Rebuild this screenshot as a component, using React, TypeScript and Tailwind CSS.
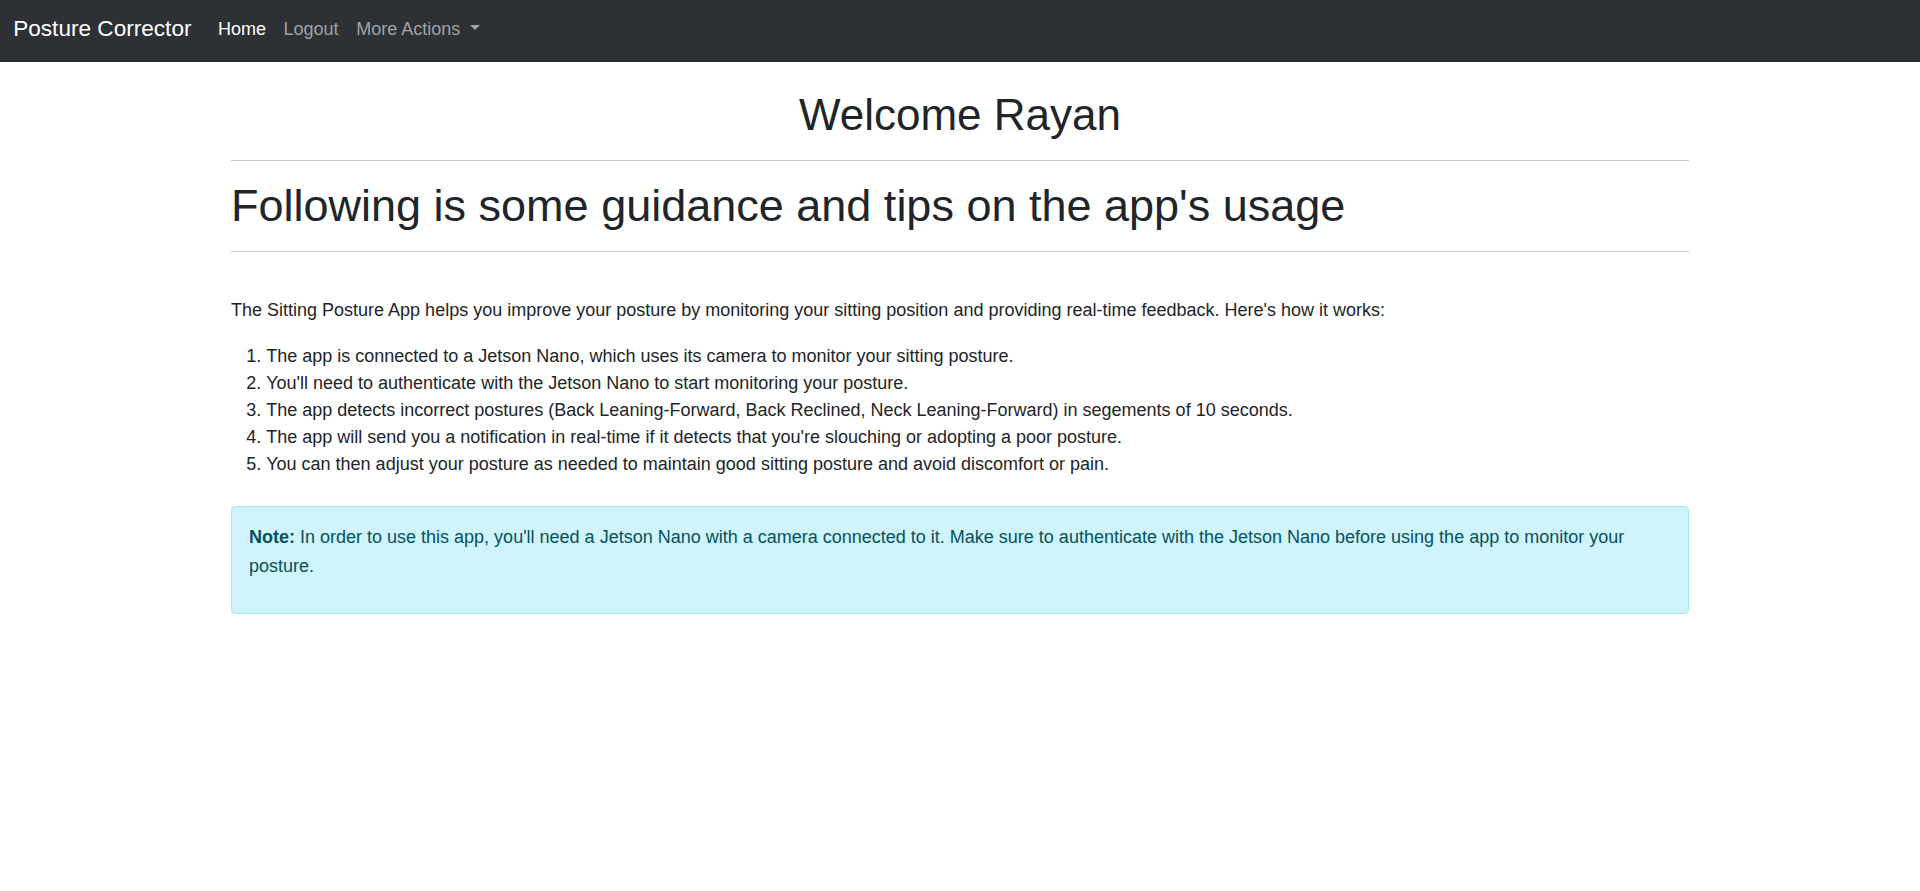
import React from 'react';

const steps = [
    'The app is connected to a Jetson Nano, which uses its camera to monitor your sitting posture.',
    "You'll need to authenticate with the Jetson Nano to start monitoring your posture.",
    'The app detects incorrect postures (Back Leaning-Forward, Back Reclined, Neck Leaning-Forward) in segements of 10 seconds.',
    "The app will send you a notification in real-time if it detects that you're slouching or adopting a poor posture.",
    'You can then adjust your posture as needed to maintain good sitting posture and avoid discomfort or pain.',
];

const Navbar = () => (
    <nav className="bg-[#2d3035] px-[13.2px] py-[8.8px] flex items-center">
        <a href="#" className="text-white text-[22.6px] leading-[33px] pt-[3.5px] pb-[7.5px] mr-[17.6px]">
            Posture Corrector
        </a>
        <ul className="flex items-center">
            <li>
                <a href="#" className="block text-white text-[18px] leading-[26.4px] px-[8.8px] pt-[6.8px] pb-[10.8px]">
                    Home
                </a>
            </li>
            <li>
                <a href="#" className="block text-[#a0a2a4] text-[18px] leading-[26.4px] px-[8.8px] pt-[6.8px] pb-[10.8px]">
                    Logout
                </a>
            </li>
            <li>
                <a href="#" className="block text-[#a0a2a4] text-[18px] leading-[26.4px] px-[8.8px] pt-[6.8px] pb-[10.8px]">
                    More Actions{' '}
                    <span className="inline-block ml-[4.5px] align-[4.5px] w-0 h-0 border-t-[5.3px] border-x-[5.3px] border-x-transparent border-t-[#a0a2a4]" />
                </a>
            </li>
        </ul>
    </nav>
);

export default function App() {
    return (
        <div className="min-h-screen bg-white text-[#212529] font-['Liberation_Sans',Arial,sans-serif] text-[18px] leading-[27px]">
            <Navbar />

            <main className="w-[1458px] mx-auto">
                <h1 className="mt-[27.5px] text-[44px] leading-[1.2] font-normal text-center">Welcome Rayan</h1>
                <hr className="mt-[18.1px] mb-[18.1px] border-0 border-t border-[#c8c9ca]" />

                <h1 className="text-[45px] leading-[1.2] font-normal">
                    Following is some guidance and tips on the app's usage
                </h1>
                <hr className="mt-[17.9px] mb-[17.6px] border-0 border-t border-[#c8c9ca]" />

                <p className="mt-[45.3px] mb-[19px]">
                    The Sitting Posture App helps you improve your posture by monitoring your sitting position and
                    providing real-time feedback. Here's how it works:
                </p>

                <ol className="list-decimal pl-[35.2px] mb-[27.5px]">
                    {steps.map((s) => (
                        <li key={s}>{s}</li>
                    ))}
                </ol>

                <div className="bg-[#cff4fc] border border-[#9eeaf9] text-[#055160] rounded-[4px] px-[17px] pt-[16.5px] pb-[16.5px] leading-[28.3px]">
                    <p className="mb-[17px]">
                        <strong className="font-bold">Note:</strong> In order to use this app, you'll need a Jetson Nano
                        with a camera connected to it. Make sure to authenticate with the Jetson Nano before using the
                        app to monitor your posture.
                    </p>
                </div>
            </main>
        </div>
    );
}
